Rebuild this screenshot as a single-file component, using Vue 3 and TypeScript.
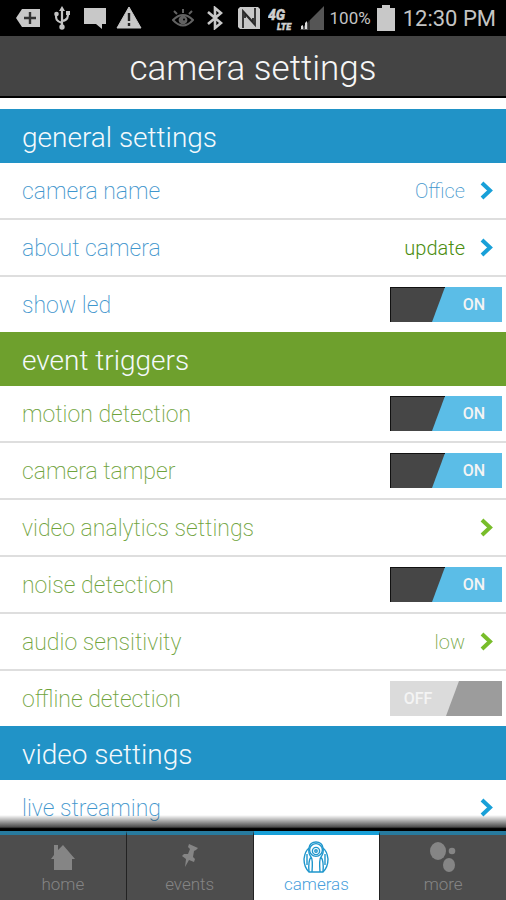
<script setup lang="ts">
import { ref, reactive } from 'vue'

type Tone = 'blue' | 'green'
interface Row {
  id: string
  label: string
  kind: 'link' | 'toggle'
  value?: string
  strong?: boolean
  on?: boolean
}
interface Section {
  title: string
  tone: Tone
  rows: Row[]
}

const sections = reactive<Section[]>([
  {
    title: 'general settings',
    tone: 'blue',
    rows: [
      { id: 'name', label: 'camera name', kind: 'link', value: 'Office' },
      { id: 'about', label: 'about camera', kind: 'link', value: 'update', strong: true },
      { id: 'led', label: 'show led', kind: 'toggle', on: true },
    ],
  },
  {
    title: 'event triggers',
    tone: 'green',
    rows: [
      { id: 'motion', label: 'motion detection', kind: 'toggle', on: true },
      { id: 'tamper', label: 'camera tamper', kind: 'toggle', on: true },
      { id: 'analytics', label: 'video analytics settings', kind: 'link' },
      { id: 'noise', label: 'noise detection', kind: 'toggle', on: true },
      { id: 'audio', label: 'audio sensitivity', kind: 'link', value: 'low' },
      { id: 'offline', label: 'offline detection', kind: 'toggle', on: false },
    ],
  },
  {
    title: 'video settings',
    tone: 'blue',
    rows: [{ id: 'live', label: 'live streaming', kind: 'link' }],
  },
])

const tabs = ['home', 'events', 'cameras', 'more'] as const
const active = ref<string>('cameras')
</script>

<template>
  <div class="screen">
    <div class="status">
      <div class="group">
        <svg width="24" height="20" viewBox="0 0 24 20"><path d="M0 10 6 1H24V19H6Z" fill="#c8c8c8" /><path d="M14 4V16M8 10H20" stroke="#333" stroke-width="2.4" /></svg>
        <svg width="16" height="24" viewBox="0 0 16 24" fill="none" stroke="#c4c4c4" stroke-width="2.2"><path d="M8 3V20M8 17C2 15 2 13 2 9M8 15C14 14 14 11 14 7" /><path d="M8 0 11 5H5Z" fill="#c4c4c4" stroke="none" /><circle cx="8" cy="21" r="2.7" fill="#c4c4c4" stroke="none" /><circle cx="2.5" cy="8" r="2.3" fill="#c4c4c4" stroke="none" /><path d="M12 5H16V9H12Z" fill="#c4c4c4" stroke="none" /></svg>
        <svg width="22" height="22" viewBox="0 0 22 22"><path d="M0 1H22V17H18V22L12 17H0Z" fill="#c8c8c8" /></svg>
        <svg class="warning" width="26" height="24" viewBox="0 0 26 24"><path d="M13 1 25 22H1Z" fill="#c8c8c8" stroke="#c8c8c8" stroke-linejoin="round" /><path d="M13 7V15M13 17V20" stroke="#222" stroke-width="2.4" /></svg>
      </div>
      <div class="group right">
        <svg class="eye" width="22" height="20" viewBox="0 0 22 20" fill="none" stroke="#626262" stroke-width="2"><path d="M1 12Q11 2 21 12Q11 23 1 12Z" /><circle cx="11" cy="12" r="3.4" fill="#626262" /><circle cx="12" cy="11.5" r="1" fill="#000" stroke="none" /><path d="M11 5V1M5 6 2 3M17 6 20 3" /></svg>
        <svg class="bt" width="16" height="24" viewBox="0 0 16 24" fill="none" stroke="#c8c8c8" stroke-width="2.6"><path d="M1 6 14 17 8 22V2L14 7 1 18" /></svg>
        <svg class="nfc" width="22" height="22" viewBox="0 0 22 22"><path d="M2 0H20L22 2V22H2L0 20V2Z" fill="#c8c8c8" /><path d="M5 21V4L15 15V11M17 1V18L7 7V11" fill="none" stroke="#292929" stroke-width="1.8" /></svg>
        <svg class="lte" width="26" height="26" viewBox="0 0 26 26" fill="#cfcfcf" stroke="#cfcfcf" stroke-width="0.4" font-family="Roboto, sans-serif" font-weight="900" font-style="italic"><text x="0" y="15" font-size="14">4G</text><text x="9" y="25" font-size="9">LTE</text></svg>
        <svg class="signal" width="24" height="24" viewBox="0 0 24 24"><path d="M24 0V24H0Z" fill="#555" /><path d="M1 23V20L3 19V23ZM5 23V17L7 15V23Z" fill="#ddd" /><path d="M9 14V24" stroke="#111" /></svg>
        <span class="percent">100%</span>
        <svg class="battery" width="18" height="26" viewBox="0 0 18 26"><path d="M5 0H13V3H18V26H0V3H5Z" fill="#c8c8c8" /></svg>
        <time class="clock">12:30 PM</time>
      </div>
    </div>

    <header class="header"><h1>camera settings</h1></header>

    <main class="list">
      <section v-for="section in sections" :key="section.title" :class="section.tone">
        <h2>{{ section.title }}</h2>
        <div class="rows">
          <template v-for="row in section.rows" :key="row.id">
            <button v-if="row.kind === 'link'" type="button" class="row">
              <span class="label">{{ row.label }}</span>
              <span v-if="row.value" class="value" :class="{ strong: row.strong }">{{ row.value }}</span>
              <svg class="chevron" width="14" height="20" viewBox="0 0 14 20" fill="none" stroke="currentColor" stroke-width="4"><path d="M2 2 10 9.5 2 17" /></svg>
            </button>
            <div v-else class="row">
              <label class="label" :for="row.id">{{ row.label }}</label>
              <span class="toggle" :class="{ on: row.on }">
                <input :id="row.id" v-model="row.on" type="checkbox" role="switch" />
                <svg viewBox="0 0 112 35" aria-hidden="true">
                  <path class="base" d="M0 0H112V35H0Z" />
                  <path v-if="row.on" class="part" d="M55 0H112V35H42Z" />
                  <path v-else class="part" d="M69 0H112V35H56Z" />
                  <path v-if="row.on" class="edge" d="M0 0H55V1H1V35H0Z" />
                </svg>
                <span class="state">{{ row.on ? 'ON' : 'OFF' }}</span>
              </span>
            </div>
          </template>
        </div>
      </section>
    </main>

    <nav class="tabs">
      <button v-for="tab in tabs" :key="tab" type="button" class="tab" :class="{ active: active === tab }" @click="active = tab">
        <svg v-if="tab === 'home'" width="26" height="32" viewBox="0 0 26 32" fill="currentColor"><path d="M1 18 4 14V4H8V9L13 4 25 18H22V29H4V18Z" /></svg>
        <svg v-else-if="tab === 'events'" width="26" height="32" viewBox="0 0 26 32" fill="currentColor"><path d="M12 3 21 7 19 9 17 10 16 16 18 18 17 21 12 19 8 26 9 18 5 15 7 13 11 13 13 8 11 6Z" /></svg>
        <svg v-else-if="tab === 'cameras'" width="26" height="32" viewBox="0 0 26 32" fill="none" stroke="currentColor" stroke-width="1.4"><path d="M6 31Q1 26 1 18Q2 10 6 7Q7 1 13 1Q19 1 20 7Q24 10 25 18Q25 26 20 31Z" /><circle cx="13" cy="9" r="6.4" /><circle cx="13" cy="10" r="3.6" /><circle cx="13" cy="10" r="1.2" /><path d="M6 7Q5 12 8 16Q10 18 9 31M20 7Q21 12 18 16Q16 18 17 31M8 16Q5 20 6 31M18 16Q21 20 20 31M4 13V24M22 13V24" /></svg>
        <svg v-else width="28" height="32" viewBox="0 0 28 32" fill="currentColor"><ellipse cx="9" cy="10" rx="8" ry="9" /><circle cx="23" cy="10" r="3.3" /><ellipse cx="20" cy="24" rx="6" ry="7" /></svg>
        <span>{{ tab }}</span>
      </button>
    </nav>
  </div>
</template>

<style>
body {
  background: #fff;
}
</style>

<style scoped>
.screen {
  display: flex;
  flex-direction: column;
  height: 100vh;
  overflow: hidden;
  font-family: Roboto, 'Liberation Sans', sans-serif;
  font-weight: 300;
}
h1,
h2 {
  margin: 0;
  font-weight: 300;
}
button {
  margin: 0;
  border: 0;
  background: none;
  font: inherit;
  text-align: left;
  cursor: pointer;
}
.status {
  display: flex;
  justify-content: space-between;
  align-items: center;
  flex: none;
  height: 36px;
  padding: 0 10px 0 16px;
  background: #000;
  color: #c4c4c4;
}
.group {
  display: flex;
  align-items: center;
  gap: 14px;
}
.warning {
  margin-left: -4px;
}
.group.right {
  gap: 6px;
}
.eye {
  margin-right: 7px;
}
.bt {
  margin-right: 9px;
}
.lte {
  margin-left: 2px;
}
.percent {
  font-size: 17px;
  font-weight: 400;
}
.clock {
  margin-left: 2px;
  font-size: 22px;
  font-weight: 400;
}
.header {
  flex: none;
  border-bottom: 2px solid #000;
  background: #444;
  color: #f6f6f6;
  text-align: center;
}
.header h1 {
  padding-top: 6px;
  font-size: 35px;
  line-height: 54px;
}
.list {
  flex: 1;
  min-height: 0;
  padding-top: 11px;
  overflow-y: auto;
  scrollbar-width: none;
}
h2 {
  padding: 4px 0 0 22px;
  color: #f4f9fc;
  font-size: 28px;
  line-height: 50px;
}
.blue h2 {
  background: #2193c7;
}
.green h2 {
  background: #6ea02d;
}
.blue {
  color: #3f96cd;
}
.green {
  color: #6fa33c;
}
.row {
  display: flex;
  align-items: center;
  box-sizing: border-box;
  width: 100%;
  height: 57px;
  padding: 0 4px 0 22px;
  border-bottom: 2px solid #dedede;
  color: inherit;
}
.row:last-child {
  height: 55px;
  border-bottom: 0;
}
.label {
  flex: 1;
  padding-top: 2px;
  font-size: 23px;
  font-weight: 200;
}
.value {
  margin-right: 15px;
  font-size: 20px;
  font-weight: 200;
}
.value.strong {
  color: #4b8d10;
  font-weight: 300;
}
.chevron {
  margin-right: 8px;
  color: #18a0d8;
}
.green .chevron {
  color: #78bd2a;
}
.toggle {
  position: relative;
  width: 112px;
  height: 35px;
  color: #f4f4f4;
}
.toggle input {
  position: absolute;
  inset: 0;
  width: 100%;
  height: 100%;
  margin: 0;
  opacity: 0;
  cursor: pointer;
}
.toggle svg {
  display: block;
  width: 100%;
  height: 100%;
}
.base {
  fill: #dbdbdb;
}
.part {
  fill: #9c9c9c;
}
.on .base {
  fill: #464646;
}
.on .part {
  fill: #5bbde7;
}
.edge {
  fill: #111;
}
.state {
  position: absolute;
  top: 0;
  left: 0;
  width: 56px;
  font-size: 16px;
  font-weight: 500;
  line-height: 36px;
  text-align: center;
  pointer-events: none;
}
.on .state {
  right: 0;
  left: auto;
}
.tabs {
  position: relative;
  display: flex;
  flex: none;
  background: #4d4d4d;
}
.tabs::before {
  content: '';
  position: absolute;
  right: 0;
  bottom: 100%;
  left: 0;
  height: 16px;
  background: linear-gradient(transparent, rgba(0, 0, 0, 0.7) 75%, #000 85%);
  pointer-events: none;
}
.tab {
  display: flex;
  flex: 1 1 0;
  flex-direction: column;
  align-items: center;
  padding: 6px 0 4px;
  border-top: 4px solid #277a9e;
  border-right: 1px solid #222;
  color: #858585;
  font-size: 17px;
  line-height: 23px;
}
.tab:last-child {
  border-right: 0;
}
.tab.active {
  border-top-color: #18a0d8;
  background: #fff;
  color: #4a9fdc;
}
.tab.active svg {
  color: #1f96cc;
}
</style>
